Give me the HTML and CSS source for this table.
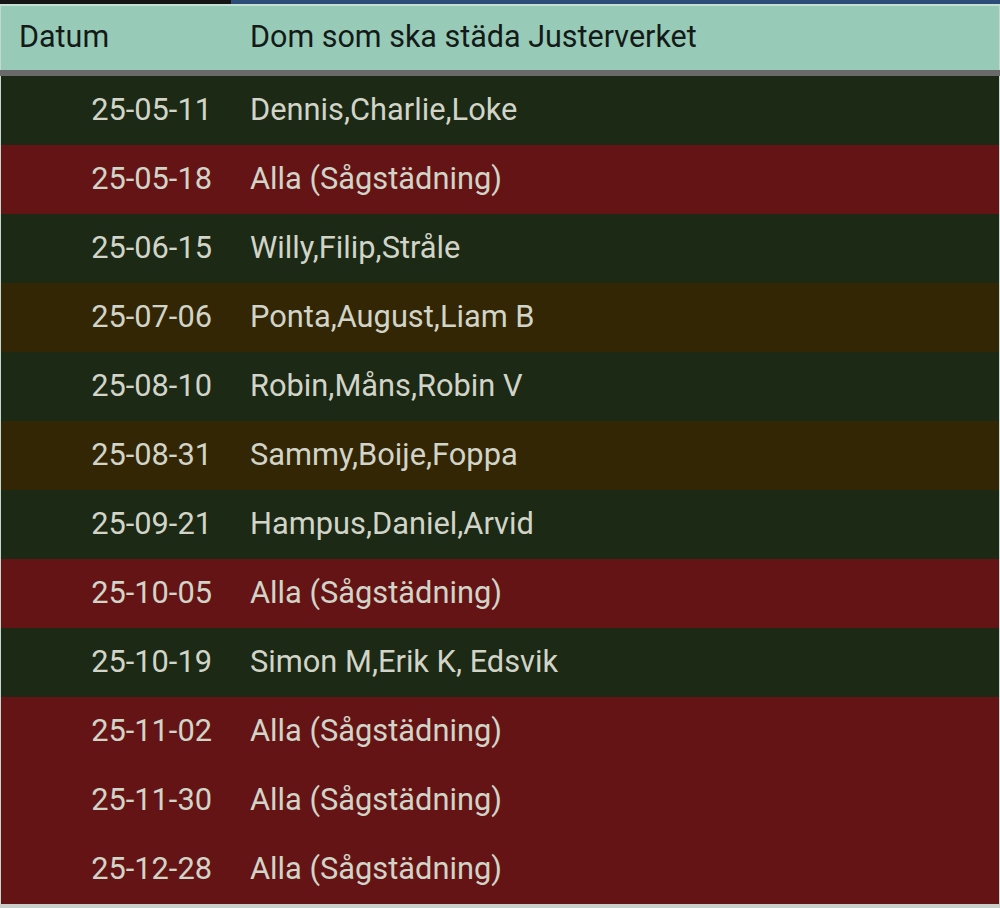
FILE: index.html
```html
<!DOCTYPE html>
<html lang="sv">
<head>
    <meta charset="UTF-8">
    <meta name="viewport" content="width=device-width, initial-scale=1.0">
    <title>Städschema Justerverket</title>
    <link rel="stylesheet" href="styles.css">
</head>
<body>
    <div class="topbar">
        <div class="topbar-left"></div>
        <div class="topbar-right"></div>
    </div>
    <table class="schedule">
        <thead>
            <tr>
                <th class="col-date">Datum</th>
                <th class="col-names">Dom som ska städa Justerverket</th>
            </tr>
        </thead>
        <tbody>
            <tr class="green"><td class="col-date">25-05-11</td><td class="col-names">Dennis,Charlie,Loke</td></tr>
            <tr class="red"><td class="col-date">25-05-18</td><td class="col-names">Alla (Sågstädning)</td></tr>
            <tr class="green"><td class="col-date">25-06-15</td><td class="col-names">Willy,Filip,Stråle</td></tr>
            <tr class="brown"><td class="col-date">25-07-06</td><td class="col-names">Ponta,August,Liam B</td></tr>
            <tr class="green"><td class="col-date">25-08-10</td><td class="col-names">Robin,Måns,Robin V</td></tr>
            <tr class="brown"><td class="col-date">25-08-31</td><td class="col-names">Sammy,Boije,Foppa</td></tr>
            <tr class="green"><td class="col-date">25-09-21</td><td class="col-names">Hampus,Daniel,Arvid</td></tr>
            <tr class="red"><td class="col-date">25-10-05</td><td class="col-names">Alla (Sågstädning)</td></tr>
            <tr class="green"><td class="col-date">25-10-19</td><td class="col-names">Simon M,Erik K, Edsvik</td></tr>
            <tr class="red"><td class="col-date">25-11-02</td><td class="col-names">Alla (Sågstädning)</td></tr>
            <tr class="red"><td class="col-date">25-11-30</td><td class="col-names">Alla (Sågstädning)</td></tr>
            <tr class="red"><td class="col-date">25-12-28</td><td class="col-names">Alla (Sågstädning)</td></tr>
        </tbody>
    </table>
</body>
</html>
```

FILE: styles.css
```css
body {
    margin: 0;
    padding: 0;
    background-color: #c9cfcb;
    font-family: Roboto, "Noto Sans", sans-serif;
}
.topbar {
    display: flex;
    height: 4px;
}
.topbar-left {
    width: 231px;
    background-color: #151515;
}
.topbar-right {
    flex: 1;
    background-color: #2e4c78;
}
.schedule {
    width: 100%;
    border-collapse: collapse;
    border-top: 2px solid #c4e0d4;
    border-left: 1px solid #c4d8cf;
    border-right: 1px solid #c4d8cf;
}
th {
    height: 60px;
    background-color: #97cbb7;
    color: #141a17;
    font-weight: normal;
    font-size: 30.5px;
    text-align: left;
    padding: 0 20px 4px 18px;
    border-bottom: 6px solid #6a6a6a;
}
th.col-names {
    padding-left: 18px;
}
thead tr {
    border-bottom: 2px solid #d6dcd9;
}
td {
    height: 66px;
    padding: 0 20px 3px;
    font-size: 30.8px;
    color: #d2d4c8;
}
td.col-names {
    padding-left: 18px;
}
.col-date {
    width: 191px;
}
td.col-date {
    text-align: right;
}
.green {
    background-color: #1b2915;
}
.red {
    background-color: #651416;
}
.brown {
    background-color: #332604;
}
```
